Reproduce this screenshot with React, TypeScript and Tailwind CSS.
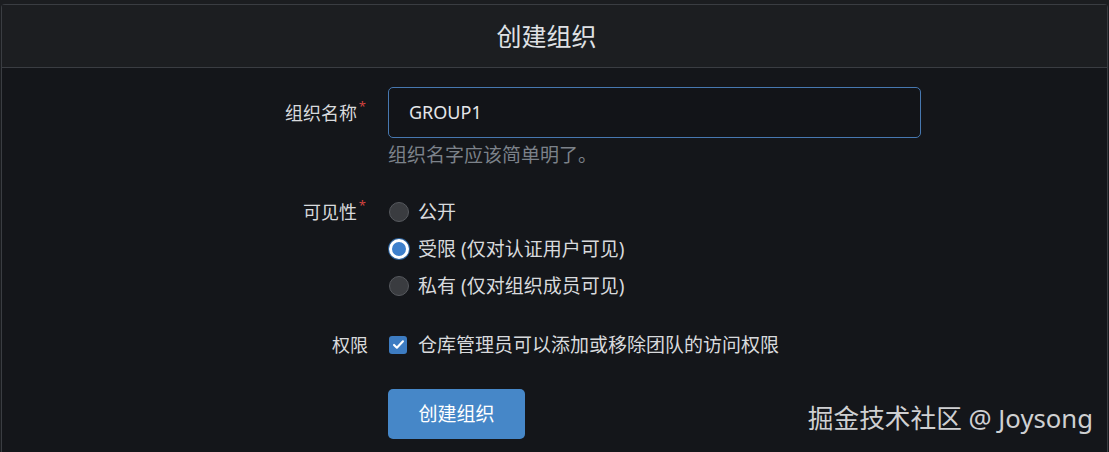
import React from "react";

const FONT = { fontFamily: '"Noto Sans", "Noto Sans CJK SC", sans-serif' };

/* ------------------ BITS ------------------ */

const Required = () => (
  <span className="absolute -right-[9px] top-[-1px] text-[13px] leading-none text-[#d2433f]">*</span>
);

const Label = ({ text, required }: { text: string; required?: boolean }) => (
  <div className={`w-[368px] shrink-0 flex justify-end ${required ? "pr-[13px]" : "pr-[2px]"}`}>
    <span className="relative text-[18px] leading-[24px] text-[#d8dadd]">
      {text}
      {required && <Required />}
    </span>
  </div>
);

const Radio = ({ checked, label }: { checked?: boolean; label: string }) => (
  <div className="h-[37px] flex items-center gap-[9px]">
    {checked ? (
      <span className="w-[20px] h-[20px] rounded-full bg-[#3e80cc] border-[3px] border-white ring-1 ring-[#2a5f99] shrink-0" />
    ) : (
      <span className="w-[20px] h-[20px] rounded-full bg-[#3a3c40] border border-[#56595e] shrink-0" />
    )}
    <span className="text-[19px] leading-[24px] text-[#d8dadd]">{label}</span>
  </div>
);

/* ------------------ MAIN ------------------ */

export default function App() {
  return (
    <div style={FONT} className="relative w-[1109px] h-[452px] overflow-hidden bg-[#1b1d20] pt-[4px]">
      <div className="mx-[1px] h-full border border-b-0 border-[#3a3d42] rounded-t-[4px] bg-[#14161a]">
        {/* header */}
        <div className="h-[63px] bg-[#1c1e21] border-b border-[#3a3d42] flex items-center justify-center pr-[16px]">
          <h2 className="text-[25px] leading-none text-[#dfe1e4] font-normal">创建组织</h2>
        </div>

        {/* name */}
        <div className="flex items-center mt-[19px]">
          <Label text="组织名称" required />
          <div className="pl-[18px]">
            <div className="w-[533px] h-[51px] rounded-[5px] border border-[#4778b0] bg-[#121418] flex items-center px-[20px]">
              <span className="text-[18px] text-[#e4e6e9]">GROUP1</span>
            </div>
          </div>
        </div>
        <div className="pl-[386px] mt-[5px] text-[19px] leading-[24px] text-[#7c828a]">组织名字应该简单明了。</div>

        {/* visibility */}
        <div className="flex mt-[26px]">
          <div className="h-[37px] flex items-center">
            <Label text="可见性" required />
          </div>
          <div className="pl-[19px] flex flex-col">
            <Radio label="公开" />
            <Radio checked label="受限 (仅对认证用户可见)" />
            <Radio label="私有 (仅对组织成员可见)" />
          </div>
        </div>

        {/* permission */}
        <div className="flex items-center h-[37px] mt-[22px]">
          <Label text="权限" />
          <div className="pl-[19px] flex items-center gap-[11px]">
            <span className="w-[18px] h-[18px] rounded-[3px] bg-[#3d7cc2] flex items-center justify-center">
              <svg width="13" height="13" viewBox="0 0 16 16" fill="none">
                <path d="M2.5 8.5l3.5 3.5 7.5-8" stroke="white" strokeWidth="2.6" strokeLinecap="round" strokeLinejoin="round" />
              </svg>
            </span>
            <span className="text-[19px] leading-[24px] text-[#d8dadd]">仓库管理员可以添加或移除团队的访问权限</span>
          </div>
        </div>

        {/* submit */}
        <div className="pl-[386px] mt-[26px]">
          <button className="w-[137px] h-[50px] rounded-[5px] bg-[#4687c8] text-white text-[19px]">创建组织</button>
        </div>
      </div>

      {/* watermark */}
      <div className="absolute right-[16px] top-[402px] text-[25.7px] leading-[34px] text-[#cfd0d2]">
        掘金技术社区 @ Joysong
      </div>
    </div>
  );
}
